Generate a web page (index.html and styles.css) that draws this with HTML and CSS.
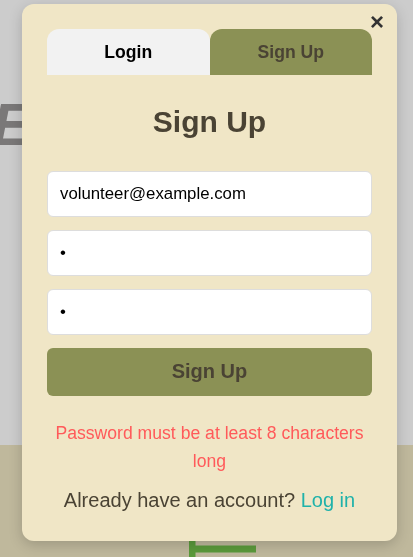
FILE: index.html
```html
<!DOCTYPE html>
<html lang="en">
<head>
<meta charset="utf-8">
<title>Sign Up</title>
<link rel="stylesheet" href="styles.css">
</head>
<body>
  <div class="page">
    <header class="hero">
      <h1 class="hero-title">Eco</h1>
    </header>
    <section class="band">
      <svg class="sprout" width="70" height="16" viewBox="0 0 70 16" aria-hidden="true">
        <rect x="0" y="0" width="6.5" height="16" fill="#72c14a"/>
        <rect x="6" y="4.5" width="61" height="7" fill="#72c14a"/>
      </svg>
    </section>
  </div>

  <div class="overlay"></div>

  <div class="modal" role="dialog">
    <button class="close" type="button" aria-label="Close">&times;</button>
    <div class="tabs">
      <button class="tab" type="button">Login</button>
      <button class="tab tab-active" type="button">Sign Up</button>
    </div>
    <h2 class="modal-title">Sign Up</h2>
    <form class="form">
      <input class="field" type="email" value="volunteer@example.com">
      <input class="field" type="password" value="a">
      <input class="field" type="password" value="a">
      <button class="submit" type="button">Sign Up</button>
    </form>
    <p class="error">Password must be at least 8 characters long</p>
    <p class="switch">Already have an account? <a class="switch-link" href="#">Log in</a></p>
  </div>
</body>
</html>
```
FILE: styles.css
```css
* {
  box-sizing: border-box;
}

html, body {
  margin: 0;
  padding: 0;
}

body {
  font-family: "Liberation Sans", Arial, sans-serif;
  background: #ffffff;
  height: 557px;
  overflow: hidden;
}

.page {
  display: flex;
  flex-direction: column;
  height: 557px;
}

.hero {
  height: 445px;
  flex: none;
  overflow: hidden;
}

.hero-title {
  margin: 90px 0 0 -8px;
  font-size: 60px;
  font-weight: bold;
  font-style: italic;
  color: #999696;
  white-space: nowrap;
}

.band {
  flex: 1;
  background: #efe6c4;
  padding: 96px 0 0 189px;
}

.sprout {
  display: block;
}

.overlay {
  position: fixed;
  inset: 0;
  background: rgba(0, 0, 0, 0.2);
}

.modal {
  position: absolute;
  top: 4px;
  left: 22px;
  width: 375px;
  padding: 25px 25px 25px;
  background: #f0e6c6;
  border-radius: 12px;
  box-shadow: 0 4px 14px rgba(0, 0, 0, 0.18);
  color: #4a4334;
}

.close {
  position: absolute;
  top: 6px;
  right: 13px;
  padding: 0;
  border: 0;
  background: none;
  font-family: "Liberation Sans", Arial, sans-serif;
  font-size: 24px;
  font-weight: bold;
  line-height: 24px;
  color: #333333;
  cursor: pointer;
}

.tabs {
  display: grid;
  grid-template-columns: 1fr 1fr;
}

.tab {
  height: 46px;
  border: 0;
  border-radius: 12px 12px 0 0;
  background: #f2f2f2;
  font-family: "Liberation Sans", Arial, sans-serif;
  font-size: 17.6px;
  font-weight: bold;
  color: #000000;
}

.tab-active {
  background: #8b9155;
  color: #4a4334;
}

.modal-title {
  margin: 29px 0 0;
  text-align: center;
  font-size: 30px;
  line-height: 36px;
  font-weight: bold;
  color: #4a4334;
}

.form {
  display: flex;
  flex-direction: column;
  gap: 13px;
  margin-top: 30.5px;
}

.field {
  height: 46px;
  padding: 0 12px;
  border: 1px solid #dddddd;
  border-radius: 6px;
  background: #ffffff;
  font-family: "Liberation Sans", Arial, sans-serif;
  font-size: 16.8px;
  color: #000000;
}

.submit {
  height: 48px;
  border: 0;
  border-radius: 6px;
  background: #8b9155;
  font-family: "Liberation Sans", Arial, sans-serif;
  font-size: 20px;
  font-weight: bold;
  color: #4a4334;
}

.error {
  margin: 23px 0 0;
  text-align: center;
  font-size: 17.6px;
  line-height: 28px;
  color: #ff5a5a;
}

.switch {
  margin: 14px 0 4px;
  text-align: center;
  font-size: 20px;
  line-height: 23px;
  color: #4a4334;
}

.switch-link {
  color: #20b2aa;
  text-decoration: none;
}
```
